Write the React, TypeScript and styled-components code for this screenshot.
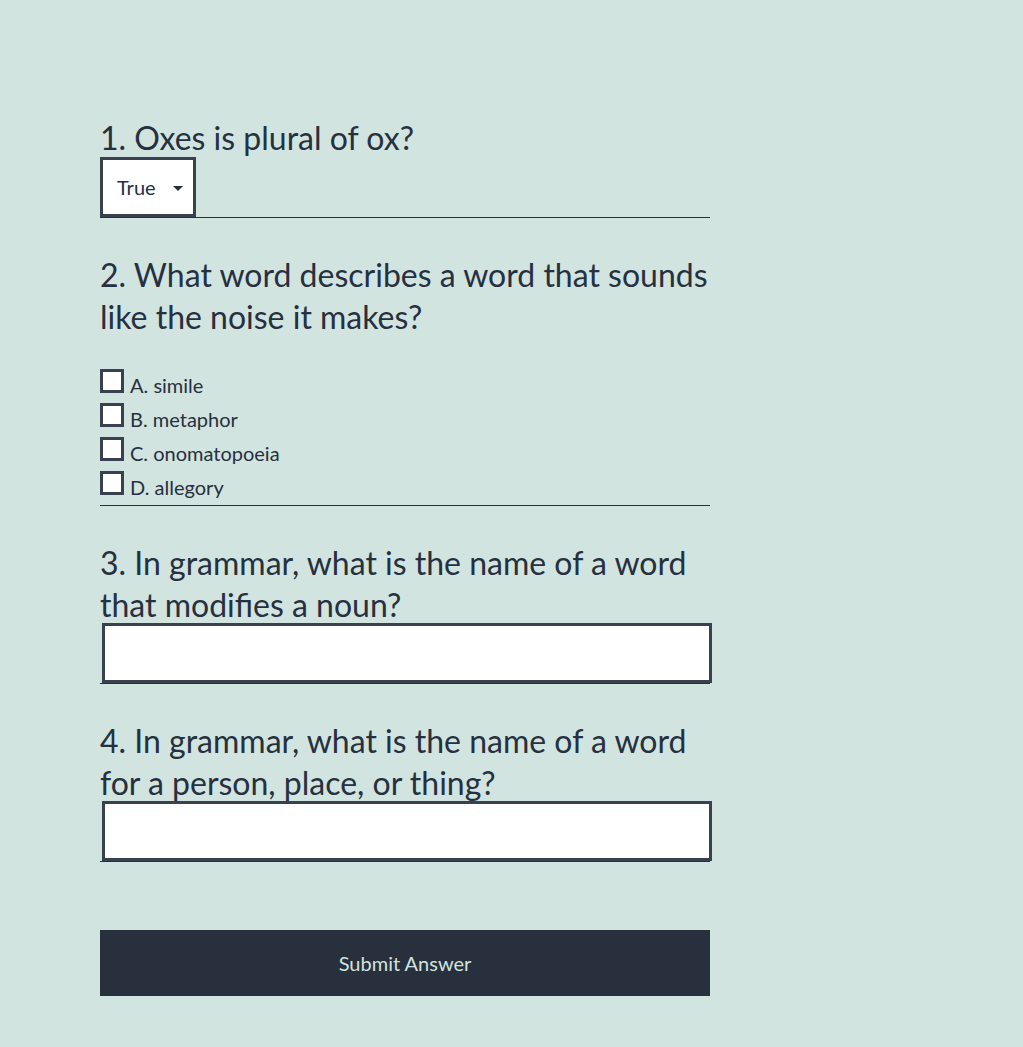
import React from 'react';
import styled, {createGlobalStyle} from 'styled-components';

const GlobalStyle = createGlobalStyle`
  html, body {
    margin: 0;
    padding: 0;
    background: #d1e4df;
  }
  body {
    font-family: Lato, "Open Sans", sans-serif;
    color: #263040;
  }
`;

const Page = styled.main`
  min-height: 1047px;
  padding: 117px 0 0 100px;
  box-sizing: border-box;
`;

const Form = styled.form`
  width: 610px;
  display: flex;
  flex-direction: column;
`;

const Question = styled.section<{$gap?: number}>`
  display: flex;
  flex-direction: column;
  border-bottom: 1px solid #263040;
  margin-top: ${p => p.$gap ?? 0}px;
`;

const Prompt = styled.h2`
  margin: 0;
  font-size: 32px;
  font-weight: 400;
  line-height: 42px;
  color: #263040;
`;

const SelectBox = styled.div`
  position: relative;
  align-self: flex-start;
  margin-top: -2px;
  width: 96px;
  height: 60px;
  box-sizing: border-box;
  border: 3px solid #374150;
  background: #fff;
  display: flex;
  align-items: center;
  padding: 0 0 0 14px;
  font-size: 20px;
  color: #263040;
`;

const Caret = styled.span`
  position: absolute;
  right: 10px;
  top: 26px;
  width: 0;
  height: 0;
  border-left: 5px solid transparent;
  border-right: 5px solid transparent;
  border-top: 5px solid #263040;
`;

const Choices = styled.ul`
  list-style: none;
  margin: 31px 0 0;
  padding: 0;
`;

const Choice = styled.li`
  height: 34px;
  display: flex;
  align-items: baseline;
`;

const Box = styled.span`
  width: 24px;
  height: 24px;
  box-sizing: border-box;
  border: 3px solid #374150;
  background: #fff;
  margin-right: 6px;
`;

const ChoiceLabel = styled.label`
  font-size: 20px;
  line-height: 24px;
  color: #263040;
`;

const TextInput = styled.input`
  margin: -3px 0 0 2px;
  width: 610px;
  height: 60px;
  box-sizing: border-box;
  border: 3px solid #374150;
  background: #fff;
  outline: none;
  font: inherit;
  padding: 0 10px;
`;

const Submit = styled.button`
  margin-top: 68px;
  height: 66px;
  border: none;
  background: #282f3d;
  color: #d1e4df;
  font-family: inherit;
  font-size: 20px;
  cursor: pointer;
`;

const choices = ['A. simile', 'B. metaphor', 'C. onomatopoeia', 'D. allegory'];

export default function App() {
  return (
    <>
      <GlobalStyle />
      <Page>
        <Form onSubmit={e => e.preventDefault()}>
          <Question>
            <Prompt>1. Oxes is plural of ox?</Prompt>
            <SelectBox>
              True
              <Caret />
            </SelectBox>
          </Question>
          <Question $gap={36}>
            <Prompt>2. What word describes a word that sounds like the noise it makes?</Prompt>
            <Choices>
              {choices.map(c => (
                <Choice key={c}>
                  <Box />
                  <ChoiceLabel>{c}</ChoiceLabel>
                </Choice>
              ))}
            </Choices>
          </Question>
          <Question $gap={36}>
            <Prompt>3. In grammar, what is the name of a word that modifies a noun?</Prompt>
            <TextInput type="text" />
          </Question>
          <Question $gap={36}>
            <Prompt>4. In grammar, what is the name of a word for a person, place, or thing?</Prompt>
            <TextInput type="text" />
          </Question>
          <Submit type="submit">Submit Answer</Submit>
        </Form>
      </Page>
    </>
  );
}
